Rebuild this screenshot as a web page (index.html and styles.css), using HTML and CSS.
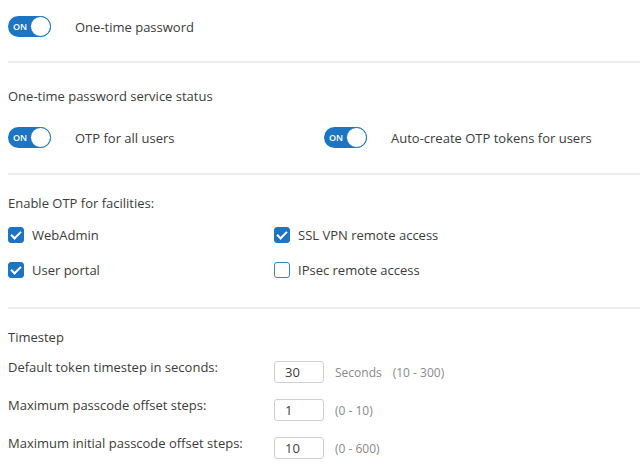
FILE: index.html
```html
<!DOCTYPE html>
<html lang="en">
<head>
    <meta charset="UTF-8">
    <title>One-time password</title>
    <link rel="stylesheet" href="styles.css">
</head>
<body>

<div class="page">
    <div class="section top">
        <div class="switch-row">
            <span class="toggle"><span class="toggle-label">ON</span><span class="knob"></span></span>
            <span class="switch-text">One-time password</span>
        </div>
    </div>

    <div class="section status">
        <div class="heading">One-time password service status</div>
        <div class="two-col">
            <div class="switch-row">
                <span class="toggle"><span class="toggle-label">ON</span><span class="knob"></span></span>
                <span class="switch-text">OTP for all users</span>
            </div>
            <div class="switch-row">
                <span class="toggle"><span class="toggle-label">ON</span><span class="knob"></span></span>
                <span class="switch-text">Auto-create OTP tokens for users</span>
            </div>
        </div>
    </div>

    <div class="section facilities">
        <div class="heading">Enable OTP for facilities:</div>
        <div class="check-grid">
            <label class="check"><span class="box checked"></span>WebAdmin</label>
            <label class="check"><span class="box checked"></span>SSL VPN remote access</label>
            <label class="check"><span class="box checked"></span>User portal</label>
            <label class="check"><span class="box"></span>IPsec remote access</label>
        </div>
    </div>

    <div class="section last">
        <div class="heading">Timestep</div>
        <div class="fields">
            <div class="field-row">
                <span class="field-label">Default token timestep in seconds:</span>
                <input class="num" type="text" value="30">
                <span class="hint">Seconds</span>
                <span class="hint">(10 - 300)</span>
            </div>
            <div class="field-row">
                <span class="field-label">Maximum passcode offset steps:</span>
                <input class="num" type="text" value="1">
                <span class="hint">(0 - 10)</span>
            </div>
            <div class="field-row">
                <span class="field-label">Maximum initial passcode offset steps:</span>
                <input class="num" type="text" value="10">
                <span class="hint">(0 - 600)</span>
            </div>
        </div>
    </div>
</div>

</body>
</html>
```

FILE: styles.css
```css
body {
    margin: 0;
    padding: 0;
    background-color: #ffffff;
    font-family: "Open Sans", "Noto Sans", sans-serif;
    font-size: 13px;
    color: #3c3c3c;
}
.page {
    padding-left: 8px;
}
.section {
    border-bottom: 2px solid #ececec;
}
.section.top {
    padding: 16px 0 24px;
}
.section.status {
    padding: 24px 0 25px;
}
.section.facilities {
    padding: 19px 0 26px;
}
.section.last {
    padding: 19px 0 0;
    border-bottom: none;
}
.heading {
    line-height: 18px;
}
.status .heading {
    margin-bottom: 22px;
}
.facilities .heading {
    margin-bottom: 12px;
}
.last .heading {
    margin-bottom: 15px;
}
.switch-row {
    display: flex;
    align-items: center;
    height: 21px;
}
.two-col {
    display: grid;
    grid-template-columns: 316px 1fr;
}
.toggle {
    position: relative;
    display: inline-block;
    width: 43px;
    height: 21px;
    border-radius: 11px;
    background-color: #1c74c4;
    flex-shrink: 0;
}
.toggle-label {
    position: absolute;
    left: 5px;
    top: 5px;
    font-size: 9px;
    line-height: 11px;
    color: #ffffff;
    font-weight: 600;
}
.knob {
    position: absolute;
    right: 0;
    top: 0;
    box-sizing: border-box;
    width: 21px;
    height: 21px;
    border-radius: 50%;
    background-color: #ffffff;
    border: 1.5px solid #1c74c4;
}
.switch-text {
    margin-left: 24px;
}
.check-grid {
    display: grid;
    grid-template-columns: 266px 1fr;
    row-gap: 13px;
}
.check {
    display: flex;
    align-items: center;
    height: 22px;
}
.box {
    box-sizing: border-box;
    width: 16px;
    height: 16px;
    border: 1.5px solid #3584cf;
    border-radius: 3px;
    margin-right: 8px;
    background-color: #ffffff;
    position: relative;
}
.box.checked {
    background-color: #1c74c4;
    border-color: #1c74c4;
}
.box.checked::after {
    content: "";
    position: absolute;
    left: 4px;
    top: 1px;
    width: 4px;
    height: 8px;
    border: solid #ffffff;
    border-width: 0 2.5px 2.5px 0;
    transform: rotate(45deg);
}
.fields {
    display: flex;
    flex-direction: column;
    gap: 16px;
}
.field-row {
    display: grid;
    grid-template-columns: 255px 50px auto auto 1fr;
    align-items: center;
    column-gap: 11px;
}
.field-label {
    align-self: start;
    line-height: 12px;
}
.num {
    box-sizing: border-box;
    width: 50px;
    height: 22px;
    margin: 0;
    border: 1px solid #cfcfcf;
    border-radius: 3px;
    padding: 0 0 0 10px;
    font-family: "Open Sans", "Noto Sans", sans-serif;
    font-size: 13px;
    color: #3c3c3c;
}
.hint {
    color: #8a8a8a;
    font-size: 12px;
}
```
